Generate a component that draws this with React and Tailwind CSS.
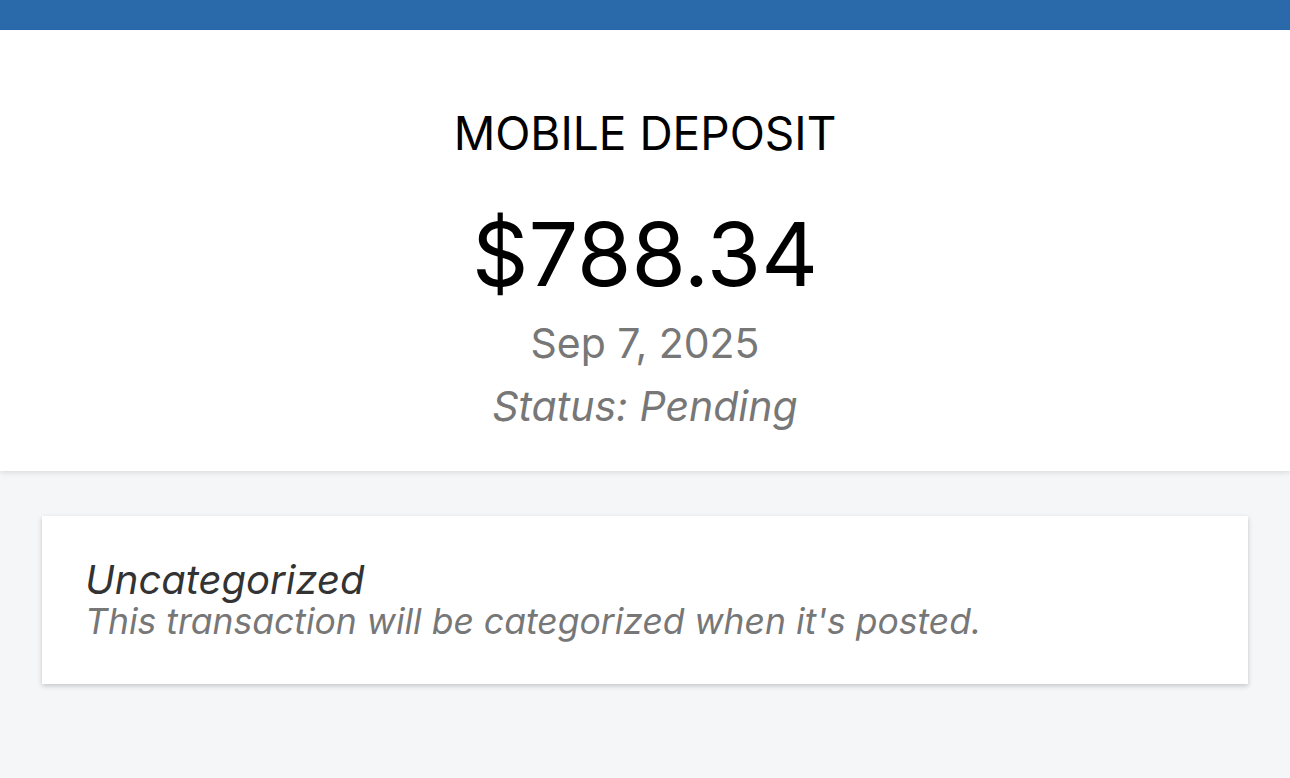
const App = () => {
  return (
    <div className="min-h-[778px] bg-[#f5f6f8] font-['Inter',sans-serif]">
      <div className="h-[30px] bg-[#2a6aab]" />
      <div className="bg-white flex flex-col items-center pt-[80px] pb-[44px] shadow-[0_2px_5px_rgba(0,0,0,0.1)]">
        <div className="text-[46px] leading-[46px] text-black">MOBILE DEPOSIT</div>
        <div className="mt-[54px] text-[88px] leading-[88px] text-black">$788.34</div>
        <div className="mt-[25px] text-[41px] leading-[41px] text-[#777777]">Sep 7, 2025</div>
        <div className="mt-[22px] text-[41px] leading-[41px] italic text-[#777777]">Status: Pending</div>
      </div>
      <div className="px-[42px] pt-[45px]">
        <div className="bg-white shadow-[0_2px_5px_rgba(0,0,0,0.2)] pl-[43px] pt-[42px] pb-[42px]">
          <div className="text-[40px] leading-[44px] italic text-[#333333]">Uncategorized</div>
          <div className="text-[35.5px] leading-[40px] italic text-[#777777]">
            This transaction will be categorized when it's posted.
          </div>
        </div>
      </div>
    </div>
  );
};

export default App;
